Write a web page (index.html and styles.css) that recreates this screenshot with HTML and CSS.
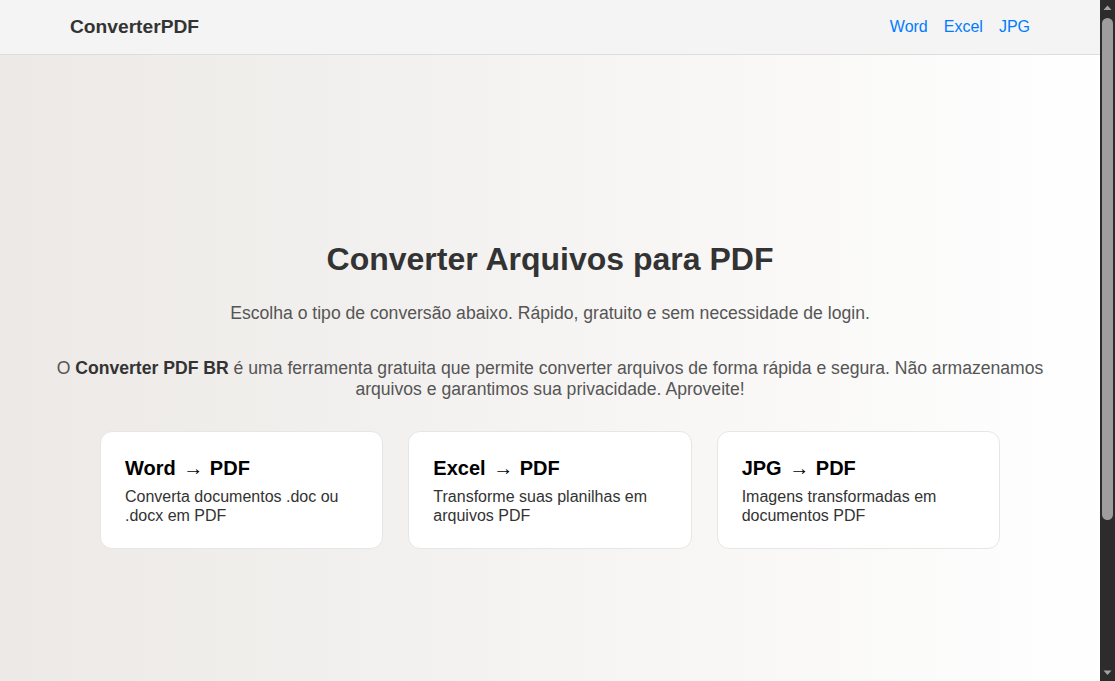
FILE: index.html
```html
<!DOCTYPE html>
<html lang="pt-BR">
<head>
<meta charset="UTF-8">
<title>ConverterPDF</title>
<link rel="stylesheet" href="styles.css">
</head>
<body>
<header class="topbar">
  <div class="logo">ConverterPDF</div>
  <nav class="nav">
    <a href="#">Word</a>
    <a href="#">Excel</a>
    <a href="#">JPG</a>
  </nav>
</header>
<main class="hero">
  <h1 class="title">Converter Arquivos para PDF</h1>
  <p class="subtitle">Escolha o tipo de conversão abaixo. Rápido, gratuito e sem necessidade de login.</p>
  <p class="intro">O <strong>Converter PDF BR</strong> é uma ferramenta gratuita que permite converter arquivos de forma rápida e segura. Não armazenamos arquivos e garantimos sua privacidade. Aproveite!</p>
  <div class="cards">
    <a class="card" href="#">
      <h3 class="card-title">Word <span class="arrow">→</span> PDF</h3>
      <p class="card-text">Converta documentos .doc ou .docx em PDF</p>
    </a>
    <a class="card" href="#">
      <h3 class="card-title">Excel <span class="arrow">→</span> PDF</h3>
      <p class="card-text">Transforme suas planilhas em arquivos PDF</p>
    </a>
    <a class="card" href="#">
      <h3 class="card-title">JPG <span class="arrow">→</span> PDF</h3>
      <p class="card-text">Imagens transformadas em documentos PDF</p>
    </a>
  </div>
</main>
<footer class="footer"></footer>
<div class="scrollbar" aria-hidden="true">
  <svg class="sb-arrow" width="15" height="17" viewBox="0 0 15 17"><polygon points="3.5,10 11.5,10 7.5,5.5" fill="#a3a3a3"/></svg>
  <div class="sb-track"><div class="sb-thumb"></div></div>
  <svg class="sb-arrow" width="15" height="17" viewBox="0 0 15 17"><polygon points="3.5,6.5 11.5,6.5 7.5,11" fill="#a3a3a3"/></svg>
</div>
</body>
</html>
```

FILE: styles.css
```css
* { box-sizing: border-box; }
html, body { margin: 0; padding: 0; }
body {
  font-family: "Liberation Sans", Arial, sans-serif;
  background: linear-gradient(to right, #ece9e6, #ffffff);
  color: #333;
  margin-right: 15px;
}
.topbar {
  height: 55px;
  background: #f4f4f4;
  border-bottom: 1px solid #dddddd;
  display: flex;
  align-items: center;
  justify-content: space-between;
  padding: 0 70px;
}
.logo {
  font-size: 19.2px;
  font-weight: bold;
  color: #333;
}
.nav { display: flex; gap: 16px; }
.nav a {
  color: #007bff;
  text-decoration: none;
  font-size: 16px;
}
.hero {
  min-height: 100vh;
  display: flex;
  flex-direction: column;
  align-items: center;
  justify-content: center;
  text-align: center;
  padding: 0 50px 1px;
}
.title {
  font-size: 32px;
  margin: 0 0 25px;
  color: #333;
}
.subtitle {
  font-size: 17.6px;
  color: #555;
  margin: 0 0 34px;
}
.intro {
  font-size: 17.6px;
  color: #555;
  margin: 0 0 31px;
}
.intro strong { color: #333; }
.cards {
  width: 900px;
  display: grid;
  grid-template-columns: repeat(3, 1fr);
  gap: 25px;
  text-align: left;
}
.card {
  display: block;
  background: #ffffff;
  border: 1px solid #e6e6e6;
  border-radius: 12px;
  padding: 25px 24px 23px;
  text-decoration: none;
}
.card-title {
  font-size: 20px;
  margin: 0 0 7px;
  color: #000;
}
.arrow { font-weight: normal; margin: 0 1px 0 2px; }
.card-text {
  font-size: 16px;
  line-height: 1.2;
  color: #333;
  margin: 0;
}
.footer { height: 143px; }

.scrollbar {
  position: fixed;
  top: 0;
  right: 0;
  width: 15px;
  height: 100vh;
  background: #2c2c2c;
  display: flex;
  flex-direction: column;
}
.sb-arrow { display: block; flex: none; }
.sb-track { flex: 1; padding: 1px 2px 0 2px; }
.sb-thumb {
  height: 502px;
  background: #9e9e9e;
  border-radius: 6px;
}
```
